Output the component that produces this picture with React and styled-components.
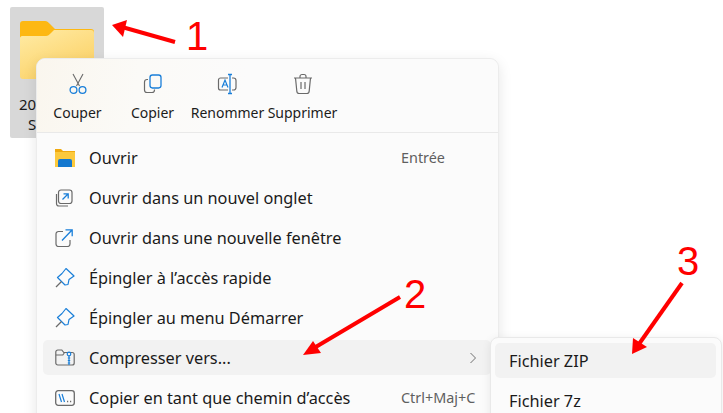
import React from "react";
import styled, { createGlobalStyle } from "styled-components";

const Global = createGlobalStyle`
  html, body { margin: 0; padding: 0; background: #fff; }
  body { font-family: "Noto Sans", "Open Sans", sans-serif; }
`;

const Desktop = styled.div`
  position: relative;
  width: 723px;
  height: 413px;
  overflow: hidden;
  background: #fff;
`;

const FolderTile = styled.div`
  position: absolute;
  left: 10px;
  top: 7px;
  width: 94px;
  height: 131px;
  background: #d8d8d8;
  border-radius: 2px;
  display: flex;
  flex-direction: column;
  align-items: center;
  padding-top: 14px;
  box-sizing: border-box;
  color: #1a1a1a;
`;

const TileLabel = styled.div`
  margin-top: 15px;
  width: 94px;
  font-size: 15px;
  line-height: 20px;
`;

const TileLine = styled.div`
  padding-left: ${(p) => p.$indent}px;
`;

const Menu = styled.div`
  position: absolute;
  left: 36px;
  top: 58px;
  width: 463px;
  height: 380px;
  box-sizing: border-box;
  background: #fbfbfb;
  border: 1px solid #ececec;
  border-radius: 9px;
  box-shadow: 0 4px 14px rgba(0, 0, 0, 0.1);
`;

const Toolbar = styled.div`
  display: flex;
  height: 73px;
  padding: 0 3px;
  border-bottom: 1px solid #e9e9e9;
  border-radius: 9px 9px 0 0;
  background: linear-gradient(100deg, #faf6ee 0%, #fbfaf7 22%, #fbfbfb 45%);
`;

const ToolButton = styled.div`
  width: 75px;
  flex-shrink: 0;
  display: flex;
  flex-direction: column;
  align-items: center;
  padding-top: 14px;
  box-sizing: border-box;
`;

const ToolLabel = styled.span`
  margin-top: 8px;
  font-size: 14px;
  line-height: 20px;
  color: #1c1c1c;
  white-space: nowrap;
`;

const Items = styled.div`
  padding: 7px 7px 0 6px;
  display: flex;
  flex-direction: column;
  gap: 5px;
`;

const Row = styled.div`
  display: flex;
  align-items: center;
  height: 35px;
  padding-left: 12px;
  border-radius: 5px;
  background: ${(p) => (p.$active ? "#f2f2f2" : "transparent")};
`;

const IconSlot = styled.div`
  width: 34px;
  flex-shrink: 0;
  display: flex;
  align-items: center;
`;

const Label = styled.span`
  flex: 1;
  font-size: 16.3px;
  color: #1a1a1a;
  white-space: nowrap;
`;

const Shortcut = styled.span`
  width: 90px;
  flex-shrink: 0;
  font-size: 14.4px;
  color: #5f5f5f;
  white-space: nowrap;
`;

const Chevron = styled.div`
  width: 90px;
  flex-shrink: 0;
  display: flex;
  justify-content: flex-end;
  padding-right: 14px;
  box-sizing: border-box;
`;

const SubMenu = styled.div`
  position: absolute;
  left: 490px;
  top: 337px;
  width: 232px;
  height: 110px;
  box-sizing: border-box;
  background: #fbfbfb;
  border: 1px solid #e9e9e9;
  border-radius: 8px;
  padding: 5px 5px 5px 4px;
  display: flex;
  flex-direction: column;
  gap: 5px;
  box-shadow: 0 2px 10px rgba(0, 0, 0, 0.08);
`;

const SubRow = styled.div`
  height: 35px;
  flex-shrink: 0;
  display: flex;
  align-items: center;
  padding-left: 14px;
  border-radius: 5px;
  font-size: 16.3px;
  color: #1a1a1a;
  background: ${(p) => (p.$active ? "#f2f2f2" : "transparent")};
`;

const Overlay = styled.svg`
  position: absolute;
  left: 0;
  top: 0;
  pointer-events: none;
`;

const Step = styled.span`
  position: absolute;
  left: ${(p) => p.$x}px;
  top: ${(p) => p.$y}px;
  font-family: "Liberation Sans", Arial, sans-serif;
  font-size: 40px;
  line-height: 40px;
  color: #ff0000;
`;

const GRAY = "#6a6a6a";
const BLUE = "#1a7fd9";

const BigFolder = () => (
  <svg width="74" height="58" viewBox="0 0 74 58">
    <defs>
      <linearGradient id="body" x1="0.2" y1="0" x2="0.8" y2="1">
        <stop offset="0" stopColor="#ffe9a0" />
        <stop offset="1" stopColor="#fbcf60" />
      </linearGradient>
    </defs>
    <path d="M3 0h22c2 0 3 1 5 3l5 5h36c2 0 3 1 3 3v10H0V3c0-2 1-3 3-3z" fill="#fdb813" />
    <path d="M0 17c0-1 1-2 2-2h24c2 0 3-1 5-3l3-3h37c2 0 3 1 3 3v43c0 2-1 3-3 3H3c-2 0-3-1-3-3z" fill="url(#body)" />
  </svg>
);

const Scissors = () => (
  <svg width="20" height="22" viewBox="0 0 20 22" fill="none">
    <path d="M5 1l6.500 12M15 1L8.500 13" stroke={GRAY} strokeWidth="1.100" />
    <circle cx="5.500" cy="17" r="3.400" stroke={BLUE} strokeWidth="1.300" />
    <circle cx="14.500" cy="17" r="3.400" stroke={BLUE} strokeWidth="1.300" />
  </svg>
);

const CopyIcon = () => (
  <svg width="20" height="22" viewBox="0 0 20 22" fill="none">
    <rect x="7" y="2" width="11" height="13" rx="2.400" stroke={BLUE} strokeWidth="1.300" />
    <path d="M5 6.500H4a2.500 2.500 0 0 0-2.500 2.500v8A2.500 2.500 0 0 0 4 19.500h5A2.500 2.500 0 0 0 11.500 17v-.5" stroke={GRAY} strokeWidth="1.200" />
  </svg>
);

const RenameIcon = () => (
  <svg width="22" height="22" viewBox="0 0 22 22" fill="none">
    <path d="M11 5H3.500A2 2 0 0 0 1.500 7v8a2 2 0 0 0 2 2H11M15 5h1.500a2.500 2.500 0 0 1 2.500 2.500v7a2.500 2.500 0 0 1-2.500 2.500H15" stroke={GRAY} strokeWidth="1.200" />
    <path d="M5 14.500L8 7l3 7.500M6 12h4" stroke={BLUE} strokeWidth="1.200" />
    <path d="M13 1.500v19M11 1.500h4M11 20.500h4" stroke={BLUE} strokeWidth="1.300" />
  </svg>
);

const TrashIcon = () => (
  <svg width="20" height="22" viewBox="0 0 20 22" fill="none" stroke={GRAY} strokeWidth="1.200">
    <path d="M1 5h18M7 5V3.500A2 2 0 0 1 9 1.500h2a2 2 0 0 1 2 2V5" />
    <path d="M2.500 5l1.300 13a2.500 2.500 0 0 0 2.500 2.500h7.400a2.500 2.500 0 0 0 2.500-2.500L17.500 5" />
    <path d="M8 9v7M12 9v7" />
  </svg>
);

const OpenFolder = () => (
  <svg width="20" height="18" viewBox="0 0 20 18">
    <path d="M0 0h6l2 2h12v4H0z" fill="#f0a90e" />
    <path d="M0 3h20v15H0z" fill="#fcc93c" />
    <path d="M3 12a2 2 0 0 1 2-2h10a2 2 0 0 1 2 2v6H3z" fill="#1478cf" />
  </svg>
);

const NewTabIcon = () => (
  <svg width="18" height="18" viewBox="0 0 18 18" fill="none">
    <path d="M1.500 5v9.500a2.500 2.500 0 0 0 2.500 2.500h9" stroke={GRAY} strokeWidth="1.200" />
    <rect x="3.500" y="1" width="13.500" height="13.500" rx="2.500" stroke={GRAY} strokeWidth="1.200" />
    <path d="M7.500 10.500l5.500-5.500M8.500 4.800h4.700v4.700" stroke={BLUE} strokeWidth="1.300" />
  </svg>
);

const NewWindowIcon = () => (
  <svg width="18" height="18" viewBox="0 0 18 18" fill="none">
    <path d="M8 2.500H3.500A2.500 2.500 0 0 0 1 5v10a2.500 2.500 0 0 0 2.500 2.500h9A2.500 2.500 0 0 0 15 15v-4" stroke={GRAY} strokeWidth="1.200" />
    <path d="M7 11.500L17 1M10.500 .8h6.700v6.500" stroke={BLUE} strokeWidth="1.300" />
  </svg>
);

const PinIcon = () => (
  <svg width="20" height="20" viewBox="0 0 20 20" fill="none">
    <path d="M7 6l4-5 8 7.500-5 3.500-1 5-3 .5-7.500-7.500z" stroke={BLUE} strokeWidth="1.200" strokeLinejoin="round" transform="translate(0 -.5)" />
    <path d="M6.500 13.500L1 19" stroke={GRAY} strokeWidth="1.200" />
  </svg>
);

const ZipIcon = () => (
  <svg width="20" height="17" viewBox="0 0 20 17" fill="none">
    <path d="M.8 3a2 2 0 0 1 2-2h4l2 2.500h8.400a2 2 0 0 1 2 2V14a2 2 0 0 1-2 2H2.800a2 2 0 0 1-2-2z" stroke={GRAY} strokeWidth="1.200" />
    <path d="M.8 6h7l1.500-2" stroke={GRAY} strokeWidth="1.200" />
    <circle cx="14" cy="5" r="1.800" stroke={BLUE} strokeWidth="1.200" />
    <path d="M14 7v9M12.800 9h2.400M12.800 11.500h2.400M12.800 14h2.400" stroke={BLUE} strokeWidth="1.200" />
  </svg>
);

const PathIcon = () => (
  <svg width="20" height="16" viewBox="0 0 20 16" fill="none">
    <rect x=".7" y=".7" width="18.600" height="14.600" rx="2.500" stroke={GRAY} strokeWidth="1.300" />
    <path d="M4 4l2.500 8M7 4l2.500 8" stroke={BLUE} strokeWidth="1.200" />
    <path d="M12 11.500h1.200M15 11.500h1.200" stroke={GRAY} strokeWidth="1.300" />
  </svg>
);

const ChevronIcon = () => (
  <svg width="8" height="12" viewBox="0 0 8 12" fill="none">
    <path d="M1.500 1l5 5-5 5" stroke="#707070" strokeWidth="1" />
  </svg>
);

const tools = [
  { label: "Couper", icon: <Scissors /> },
  { label: "Copier", icon: <CopyIcon /> },
  { label: "Renommer", icon: <RenameIcon /> },
  { label: "Supprimer", icon: <TrashIcon /> },
];

const rows = [
  { label: "Ouvrir", icon: <OpenFolder />, shortcut: "Entrée" },
  { label: "Ouvrir dans un nouvel onglet", icon: <NewTabIcon /> },
  { label: "Ouvrir dans une nouvelle fenêtre", icon: <NewWindowIcon /> },
  { label: "Épingler à l’accès rapide", icon: <PinIcon /> },
  { label: "Épingler au menu Démarrer", icon: <PinIcon /> },
  { label: "Compresser vers...", icon: <ZipIcon />, active: true, submenu: true },
  { label: "Copier en tant que chemin d’accès", icon: <PathIcon />, shortcut: "Ctrl+Maj+C" },
];

const arrows = [
  { line: "M175 42L122 27", head: "112,25 127,20 123,37" },
  { line: "M400 297L314 348", head: "303,355 313,341 321,353" },
  { line: "M682 283L639 344", head: "632,354 633,338 647,347" },
];

export default function App() {
  return (
    <>
      <Global />
      <Desktop>
        <FolderTile>
          <BigFolder />
          <TileLabel>
            <TileLine $indent={9}>20</TileLine>
            <TileLine $indent={18}>S</TileLine>
          </TileLabel>
        </FolderTile>

        <Menu>
          <Toolbar>
            {tools.map((t) => (
              <ToolButton key={t.label}>
                {t.icon}
                <ToolLabel>{t.label}</ToolLabel>
              </ToolButton>
            ))}
          </Toolbar>
          <Items>
            {rows.map((r) => (
              <Row key={r.label} $active={r.active}>
                <IconSlot>{r.icon}</IconSlot>
                <Label>{r.label}</Label>
                {r.shortcut && <Shortcut>{r.shortcut}</Shortcut>}
                {r.submenu && (
                  <Chevron>
                    <ChevronIcon />
                  </Chevron>
                )}
              </Row>
            ))}
          </Items>
        </Menu>

        <SubMenu>
          <SubRow $active>Fichier ZIP</SubRow>
          <SubRow>Fichier 7z</SubRow>
        </SubMenu>

        <Overlay width="723" height="413" viewBox="0 0 723 413">
          {arrows.map((a) => (
            <g key={a.line}>
              <path d={a.line} stroke="#ff0000" strokeWidth="4" fill="none" />
              <polygon points={a.head} fill="#ff0000" />
            </g>
          ))}
        </Overlay>
        <Step $x={186} $y={16}>1</Step>
        <Step $x={404} $y={274}>2</Step>
        <Step $x={677} $y={241}>3</Step>
      </Desktop>
    </>
  );
}
